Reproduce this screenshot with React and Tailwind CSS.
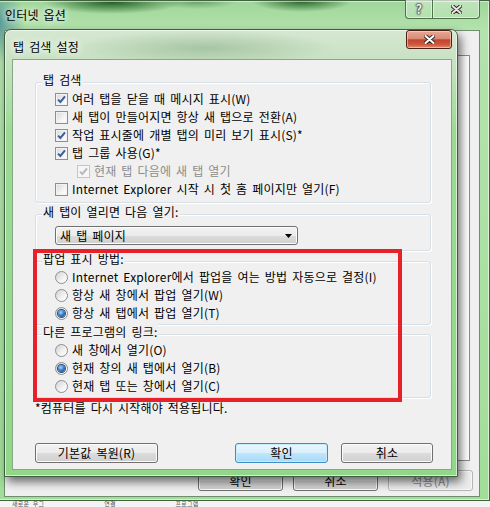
import clsx from 'clsx';

// 체크박스 (Win7 스타일)
function CheckBox({ checked, disabled }) {
  return (
    <span
      className={clsx(
        'flex h-[13px] w-[13px] shrink-0 items-center justify-center border',
        disabled
          ? 'border-[#c6c6c6] bg-[#f6f6f6]'
          : 'border-[#8e8f8f] bg-[linear-gradient(135deg,#d6d6d6,#f4f4f4_60%,#ffffff)] shadow-[inset_0_0_0_1px_#f2f2f2]'
      )}
    >
      {checked && (
        <svg width="9" height="9" viewBox="0 0 9 9">
          <path
            d="M1 4.6 L3.4 7 L8 1.4"
            fill="none"
            stroke={disabled ? '#b9b9b9' : '#3f5c9c'}
            strokeWidth="2"
          />
        </svg>
      )}
    </span>
  );
}

// 라디오 버튼
function Radio({ checked }) {
  return (
    <span className="flex h-[13px] w-[13px] shrink-0 items-center justify-center rounded-full border border-[#8e8f8f] bg-[linear-gradient(135deg,#d2d2d2,#f3f3f3_60%,#ffffff)]">
      {checked && (
        <span className="h-[7px] w-[7px] rounded-full bg-[radial-gradient(circle_at_40%_35%,#9fd8ff,#2d6fbf_55%,#163f78)] shadow-[0_0_0_1px_#2b4c78]" />
      )}
    </span>
  );
}

function Option({ control, label, disabled, className }) {
  return (
    <div className={clsx('flex h-[18px] items-center gap-[4px]', className)}>
      {control}
      <span className={disabled ? 'text-[#8d8d8d]' : 'text-black'}>{label}</span>
    </div>
  );
}

// 그룹 박스 (라벨이 테두리 위에 걸침)
function Group({ title, className, children }) {
  return (
    <div
      className={clsx(
        'rounded-[3px] border border-[#d5dfe5] shadow-[inset_1px_1px_0_#fff,1px_1px_0_#fff]',
        className
      )}
    >
      <div className="-mt-[11px] ml-[6px] w-fit bg-[#f0f0f0] px-[1px] leading-[16px] text-black">
        {title}
      </div>
      {children}
    </div>
  );
}

function Button({ children, primary, disabled, className }) {
  return (
    <div
      className={clsx(
        'flex items-center justify-center rounded-[3px] border leading-[16px]',
        primary &&
          'border-[#3c8fc6] bg-[linear-gradient(to_bottom,#eaf6fd,#d9f0fc_50%,#bee6fd_50%,#a7d9f5)] text-black shadow-[inset_0_0_0_1px_#c8ecfc]',
        disabled &&
          'border-[#b5b5b5] bg-[#ececec] text-[#8a8a8a] shadow-[inset_0_0_0_1px_#f8f8f8]',
        !primary &&
          !disabled &&
          'border-[#707070] bg-[linear-gradient(to_bottom,#f2f2f2,#ebebeb_50%,#dddddd_50%,#cfcfcf)] text-black shadow-[inset_0_0_0_1px_#fcfcfc]',
        className
      )}
    >
      {children}
    </div>
  );
}

function CloseGlyph({ color = '#ffffff' }) {
  return (
    <svg width="11" height="9" viewBox="0 0 11 9">
      <path d="M1.5 1 L9.5 8 M9.5 1 L1.5 8" stroke="#3a2a26" strokeWidth="4" strokeLinecap="round" />
      <path d="M1.5 1 L9.5 8 M9.5 1 L1.5 8" stroke={color} strokeWidth="2" strokeLinecap="round" />
    </svg>
  );
}

export default function App() {
  return (
    <div className="relative h-[507px] w-[490px] overflow-hidden bg-[#f4f4f4] text-[12px] leading-[16px] tracking-[0.2px] [word-spacing:2px] [font-family:'Noto_Sans_CJK_KR','Noto_Sans',sans-serif]">
      {/* 뒤쪽 인터넷 옵션 창 */}
      <div className="-ml-[4px] flex h-[501px] w-[494px] flex-col border border-[#41623f] bg-[radial-gradient(70px_12px_at_115px_1px,rgba(25,85,25,0.95),transparent),radial-gradient(50px_11px_at_305px_0px,rgba(25,85,25,0.9),transparent),radial-gradient(40px_8px_at_200px_0px,rgba(60,120,60,0.6),transparent),radial-gradient(28px_40px_at_0px_22px,rgba(70,140,150,0.9),transparent),linear-gradient(to_bottom,#9fd69a,#b4e3ad_30px,#a2dd99)] shadow-[inset_0_0_0_1px_rgba(255,255,255,0.55)]">
        <div className="flex h-[29px] shrink-0 items-start justify-between">
          <span className="ml-[8px] mt-[6px] text-black [text-shadow:0_0_6px_#fff,0_0_10px_#fff]">
            인터넷 옵션
          </span>
          <div className="-mt-[1px] mr-[9px] flex h-[19px]">
            <div className="flex w-[28px] items-center justify-center rounded-bl-[4px] border border-t-0 border-[#4f6f4d] bg-[linear-gradient(to_bottom,rgba(255,255,255,0.35),rgba(255,255,255,0.1))] text-[13px] font-bold text-[#eeeeee] shadow-[inset_0_0_0_1px_rgba(255,255,255,0.5)] [text-shadow:0_0_1px_#222,0_0_2px_#222,0_0_2px_#222]">
              ?
            </div>
            <div className="flex w-[47px] items-center justify-center rounded-br-[4px] border border-l-0 border-t-0 border-[#4f6f4d] bg-[linear-gradient(to_bottom,rgba(255,255,255,0.35),rgba(255,255,255,0.1))] shadow-[inset_0_0_0_1px_rgba(255,255,255,0.5)]">
              <CloseGlyph color="#e6e6e6" />
            </div>
          </div>
        </div>

        <div className="mb-[3px] ml-[7px] mr-[9px] flex flex-1 flex-col border border-[#6f8f6c] bg-[#f0f0f0]">
          <div className="mr-[9px] mt-[24px] flex-1 border border-[#898c95] bg-white" />
          <div className="mb-[5px] mt-[9px] flex h-[21px] justify-end gap-[10px] pr-[6px]">
            <Button className="w-[85px]">확인</Button>
            <Button className="w-[85px]">취소</Button>
            <Button disabled className="w-[85px]">
              적용(A)
            </Button>
          </div>
        </div>
      </div>

      {/* 아래쪽 배경 창 일부 */}
      <div className="flex h-[6px] items-center gap-[60px] pl-[12px] text-[6px] leading-[6px] text-[#555]">
        <span>새로운 우그</span>
        <span>연결</span>
        <span>프로그램</span>
      </div>

      {/* 탭 검색 설정 대화상자 */}
      <div className="absolute left-[4px] top-[29px] flex h-[448px] w-[454px] flex-col rounded-t-[7px] border border-[#3f5f45] bg-[radial-gradient(130px_18px_at_200px_18px,rgba(120,160,120,0.45),transparent),linear-gradient(to_bottom,#d6e7d2,#c8e2c2_30px,#9cda94_100px,#92d68a)] shadow-[inset_0_0_0_1px_rgba(255,255,255,0.6),3px_5px_10px_rgba(0,0,0,0.55)]">
        <div className="flex h-[29px] shrink-0 items-start justify-between">
          <span className="ml-[8px] mt-[9px] text-black [text-shadow:0_0_6px_#fff,0_0_10px_#fff]">
            탭 검색 설정
          </span>
          <div className="mr-[5px] flex h-[19px] w-[46px] items-center justify-center rounded-[3px] border border-[#4a2119] bg-[linear-gradient(to_bottom,#e9a896,#d98b77_45%,#c3432b_52%,#cd5a3e_80%,#e08d74)] shadow-[inset_0_0_0_1px_rgba(255,220,210,0.55)]">
            <CloseGlyph />
          </div>
        </div>

        <div className="relative mb-[6px] ml-[7px] mr-[5px] flex flex-1 flex-col border border-[#86a886] bg-[#f0f0f0] pl-[22px] pr-[20px] pt-[22px]">
          <Group title="탭 검색" className="pb-[4px]">
            <div className="mt-[2px] pl-[19px]">
              <Option control={<CheckBox checked />} label="여러 탭을 닫을 때 메시지 표시(W)" />
              <Option control={<CheckBox />} label="새 탭이 만들어지면 항상 새 탭으로 전환(A)" />
              <Option control={<CheckBox checked />} label="작업 표시줄에 개별 탭의 미리 보기 표시(S)*" />
              <Option control={<CheckBox checked />} label="탭 그룹 사용(G)*" />
              <Option
                className="pl-[22px]"
                control={<CheckBox checked disabled />}
                label="현재 탭 다음에 새 탭 열기"
                disabled
              />
              <Option control={<CheckBox />} label="Internet Explorer 시작 시 첫 홈 페이지만 열기(F)" />
            </div>
          </Group>

          <Group title="새 탭이 열리면 다음 열기:" className="mt-[11px] pb-[5px]">
            <div className="ml-[19px] mt-[6px] flex h-[19px] w-[243px] items-center justify-between rounded-[3px] border border-[#707070] bg-[linear-gradient(to_bottom,#f2f2f2,#ebebeb_50%,#dddddd_50%,#cfcfcf)] pl-[4px] pr-[5px] shadow-[inset_0_0_0_1px_#fcfcfc]">
              <span>새 탭 페이지</span>
              <svg width="7" height="4" viewBox="0 0 7 4">
                <polygon points="0,0 7,0 3.5,4" fill="#000" />
              </svg>
            </div>
          </Group>

          <Group title="팝업 표시 방법:" className="mt-[10px] pb-[2px]">
            <div className="mt-[1px] pl-[19px]">
              <Option control={<Radio />} label="Internet Explorer에서 팝업을 여는 방법 자동으로 결정(I)" />
              <Option control={<Radio />} label="항상 새 창에서 팝업 열기(W)" />
              <Option control={<Radio checked />} label="항상 새 탭에서 팝업 열기(T)" />
            </div>
          </Group>

          <Group title="다른 프로그램의 링크:" className="mt-[9px] pb-[2px]">
            <div className="mt-[1px] pl-[19px]">
              <Option control={<Radio />} label="새 창에서 열기(O)" />
              <Option control={<Radio checked />} label="현재 창의 새 탭에서 열기(B)" />
              <Option control={<Radio />} label="현재 탭 또는 창에서 열기(C)" />
            </div>
          </Group>

          <p className="mt-[2px] text-black">*컴퓨터를 다시 시작해야 적용됩니다.</p>

          <div className="mt-[27px] flex h-[20px] w-[398px]">
            <Button className="w-[123px]">기본값 복원(R)</Button>
            <div className="ml-auto flex gap-[13px]">
              <Button primary className="w-[93px]">
                확인
              </Button>
              <Button className="w-[92px]">취소</Button>
            </div>
          </div>

          {/* 빨간 강조 표시 */}
          <div className="pointer-events-none absolute left-[20px] top-[189px] h-[153px] w-[369px] border-[4px] border-[#e8202a]" />
        </div>
      </div>
    </div>
  );
}
